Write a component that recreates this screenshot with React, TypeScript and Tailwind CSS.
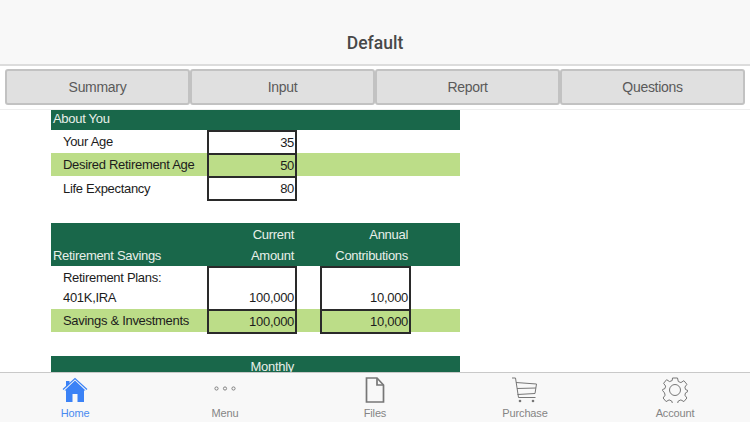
import React from 'react'

const grid = 'grid grid-cols-[156px_90px_23px_91px_49px] w-[409px]'
const cellBox = 'border-x-2 border-[#2a2a2a] text-right pr-[1px] text-[#1c1c1c]'

function Tab({ label }: { label: string }) {
    return (
        <div className="flex-1 h-[36px] flex items-center justify-center pt-[1px] bg-[#e0e0e0] border-2 border-[#c2c2c2] rounded-[3px] text-[14px] tracking-[-0.3px] text-[#5a5a5a]">
            {label}
        </div>
    )
}

function HomeIcon() {
    return (
        <svg width="26" height="26" viewBox="0 0 26 26">
            <path d="M1 12.500 13 1.500l12 11" fill="none" stroke="#3b82f6" strokeWidth="1.200" />
            <path d="M4 4h3.500v3L4 10.500z" fill="#3b82f6" />
            <path d="M13 3.500 2.500 13.500h1.500v11.500h6.500v-8h5v8H22V13.500h1.500z" fill="#3b82f6" />
        </svg>
    )
}

function DotsIcon() {
    return (
        <svg width="24" height="26" viewBox="0 0 24 26" fill="none" stroke="#777" strokeWidth="0.9">
            <circle cx="3.500" cy="11.500" r="1.600" />
            <circle cx="12" cy="11.500" r="1.600" />
            <circle cx="20.500" cy="11.500" r="1.600" />
        </svg>
    )
}

function FileIcon() {
    return (
        <svg width="20" height="26" viewBox="0 0 20 26" fill="none" stroke="#777" strokeWidth="1.700">
            <path d="M1.500 1h10.500l6.500 7v17H1.500z" />
            <path d="M12 1v7h6.500" />
        </svg>
    )
}

function CartIcon() {
    return (
        <svg width="28" height="26" viewBox="0 0 28 26" fill="none" stroke="#777" strokeWidth="1">
            <path d="M1 1h3.500l3 19.500h17" />
            <path d="M5 5.500 25.500 7l-1.500 9.500-17.500 1" />
            <path d="M6 11.500 25 11" />
            <circle cx="9" cy="24" r="1.300" fill="#777" stroke="none" />
            <circle cx="22" cy="24" r="1.300" fill="#777" stroke="none" />
        </svg>
    )
}

function GearIcon() {
    return (
        <svg width="26" height="26" viewBox="0 0 26 26" fill="none" stroke="#777" strokeWidth="1">
            <path d="M10.500 1h5l.8 3.500 2.600 1.100 3-1.900 3 3.600-2 2.800.6 2.400 2.500 1.100v.8l-2.500 1.500-.6 2.300 2 2.800-3 3.600-3-1.700-2.600 1.100-.8 2.500h-5l-.8-2.500-2.600-1.100-3 1.700-3-3.600 2-2.800-.6-2.300L.5 13.400v-.8l2.500-1.100.6-2.400-2-2.800 3-3.600 3 1.900 2.600-1.100z" />
            <circle cx="13" cy="13" r="5.500" />
        </svg>
    )
}

function TabItem({ label, active, children }: { label: string; active?: boolean; children: React.ReactNode }) {
    return (
        <div className="flex-1 flex flex-col items-center pt-[4px]">
            <div className="h-[26px] flex items-center justify-center">{children}</div>
            <span className={`mt-[4px] text-[11px] leading-[13px] tracking-[-0.15px] ${active ? 'text-[#4a8bf0]' : 'text-[#858585]'}`}>{label}</span>
        </div>
    )
}

export default function App() {
    return (
        <div className="w-[750px] h-[422px] flex flex-col overflow-hidden bg-white font-['Liberation_Sans',Arial,sans-serif]">
            <div className="h-[66px] shrink-0 bg-[#f8f8f8] border-b-2 border-[#dcdcdc] flex items-end justify-center pb-[11px]">
                <h1 className="font-['Roboto',sans-serif] text-[17.5px] leading-[20px] font-medium text-[#484848]">Default</h1>
            </div>

            <div className="h-[44px] shrink-0 border-b border-[#eeeeee] pt-[3px] px-[5px]">
                <div className="flex">
                    <Tab label="Summary" />
                    <Tab label="Input" />
                    <Tab label="Report" />
                    <Tab label="Questions" />
                </div>
            </div>

            <div className="flex-1 overflow-hidden pl-[51px] text-[13px] tracking-[-0.3px] text-[#1c1c1c]">
                <div className="h-[20px] w-[409px] bg-[#19674a] text-[#e8efe9] pl-[2px] leading-[18px]">About You</div>

                <div className={`${grid} h-[23px] leading-[23px]`}>
                    <div className="pl-[12px]">Your Age</div>
                    <div className={`${cellBox} border-t-2 leading-[21px]`}>35</div>
                </div>
                <div className={`${grid} h-[23px] leading-[23px] bg-[#bcdd88]`}>
                    <div className="pl-[12px]">Desired Retirement Age</div>
                    <div className={`${cellBox} border-t-2 leading-[22px]`}>50</div>
                </div>
                <div className={`${grid} h-[25px] leading-[25px]`}>
                    <div className="pl-[12px]">Life Expectancy</div>
                    <div className={`${cellBox} border-y-2 leading-[21px]`}>80</div>
                </div>

                <div className={`${grid} mt-[22px] h-[43px] bg-[#19674a] text-[#e8efe9] leading-[21px] pt-[1px]`}>
                    <div className="pl-[2px] pt-[21px]">Retirement Savings</div>
                    <div className="text-right pr-[3px]">
                        <div>Current</div>
                        <div>Amount</div>
                    </div>
                    <div></div>
                    <div className="text-right pr-[3px]">
                        <div>Annual</div>
                        <div>Contributions</div>
                    </div>
                </div>
                <div className={`${grid} h-[43px] leading-[20px]`}>
                    <div className="pl-[12px] pt-[2px]">
                        <div>Retirement Plans:</div>
                        <div>401K,IRA</div>
                    </div>
                    <div className={`${cellBox} border-t-2 pt-[20px]`}>100,000</div>
                    <div></div>
                    <div className={`${cellBox} border-t-2 pt-[20px]`}>10,000</div>
                </div>
                <div className={`${grid} h-[23px] leading-[24px] bg-[#bcdd88]`}>
                    <div className="pl-[12px]">Savings &amp; Investments</div>
                    <div className={`${cellBox} border-y-2 h-[25px] leading-[21px]`}>100,000</div>
                    <div></div>
                    <div className={`${cellBox} border-y-2 h-[25px] leading-[21px]`}>10,000</div>
                </div>

                <div className="mt-[24px] w-[409px] h-[20px] bg-[#19674a] text-[#e8efe9] leading-[22px] pl-[156px]">
                    <span className="block w-[87px] text-right">Monthly</span>
                </div>
            </div>

            <div className="h-[50px] shrink-0 bg-[#f8f8f8] border-t border-[#c9c9c9] flex">
                <TabItem label="Home" active><HomeIcon /></TabItem>
                <TabItem label="Menu"><DotsIcon /></TabItem>
                <TabItem label="Files"><FileIcon /></TabItem>
                <TabItem label="Purchase"><CartIcon /></TabItem>
                <TabItem label="Account"><GearIcon /></TabItem>
            </div>
        </div>
    )
}
